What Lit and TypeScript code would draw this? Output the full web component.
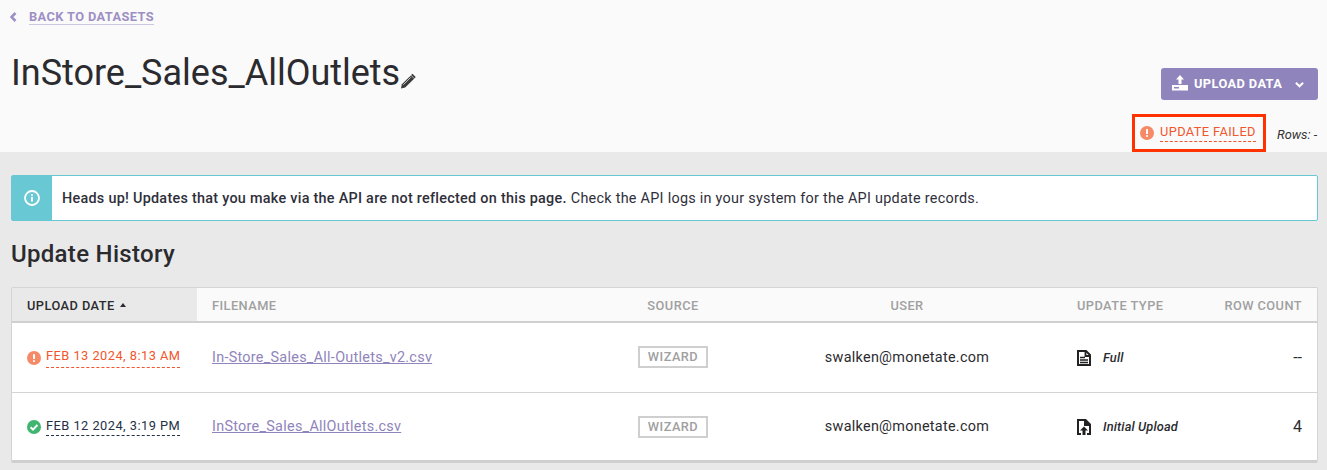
import { LitElement, html, css } from "lit";
import { customElement } from "lit/decorators.js";

const alertIcon = (c: string) => html`<svg class="st" viewBox="0 0 14 14"><circle cx="7" cy="7" r="7" fill="${c}"/><rect x="6" y="3" width="2" height="5" rx=".6" fill="#fff"/><circle cx="7" cy="10" r="1.1" fill="#fff"/></svg>`;
const okIcon = html`<svg class="st" viewBox="0 0 14 14"><circle cx="7" cy="7" r="7" fill="#3fb56f"/><path d="M3.600 7.200 6 9.600 10.400 5" fill="none" stroke="#fff" stroke-width="2"/></svg>`;

@customElement("app-root")
export class AppRoot extends LitElement {
  static styles = css`
    :host { display: block; width: 1327px; height: 470px; overflow: hidden; background: #e9e9e9; font-family: Roboto, "Liberation Sans", sans-serif; color: #2b2b2f; }
    .head { height: 152px; background: #fafafa; box-sizing: border-box; padding: 0 9px 0 11px; display: flex; flex-direction: column; }
    .back { display: flex; align-items: center; height: 34px; margin-left: -1px; }
    .back svg { width: 7px; height: 10px; margin-right: 12px; }
    .back a { font-size: 12.8px; font-weight: 700; letter-spacing: .4px; color: #9d8fc4; border-bottom: 1px solid #cdc6e2; line-height: 14px; }
    .mid { display: flex; justify-content: space-between; align-items: flex-start; height: 82px; }
    .title { display: flex; align-items: flex-end; margin-top: 18px; }
    h1 { margin: 0; font-size: 36px; font-weight: 400; line-height: 42px; color: #2b2b2f; letter-spacing: -.01px; }
    .title svg { width: 16px; height: 17px; margin-bottom: 4px; }
    .upload { margin-top: 34px; width: 157px; height: 32px; padding-bottom: 2px; background: #8f84bb; border-radius: 3px; color: #fff; display: flex; align-items: center; box-sizing: border-box; padding-left: 11px; font-size: 12.8px; font-weight: 700; letter-spacing: .4px; }
    .upload .ic { width: 16px; height: 16px; margin-right: 6px; }
    .upload .ch { width: 9px; height: 7px; margin-left: 13px; margin-top: 2px; }
    .status { display: flex; justify-content: flex-end; align-items: center; height: 36px; margin-top: -1px; }
    .failbox { border: 3px solid #ff3300; height: 38px; box-sizing: border-box; width: 134px; display: flex; align-items: center; padding-left: 5px; gap: 6px; }
    .failbox .t { font-size: 12.8px; color: #f2552c; letter-spacing: .4px; line-height: 14px; border-bottom: 1px dashed #f2552c; padding-bottom: 2px; margin-top: 1px; }
    .st { width: 14px; height: 14px; flex: none; }
    .rows { font-size: 12.8px; font-style: italic; color: #333; margin-left: 11px; margin-top: 3px; width: 41px; white-space: nowrap; }
    .main { padding: 23px 9px 0 11px; }
    .note { display: flex; height: 46px; box-sizing: border-box; border: 1px solid #68c8d4; border-radius: 2px; background: #fff; align-items: center; font-size: 14.4px; letter-spacing: .27px; color: #2f2f3a; }
    .note .side { width: 40px; height: 100%; background: #68c8d4; display: flex; align-items: center; justify-content: center; margin-right: 10px; }
    .note svg { width: 16px; height: 16px; }
    .note b { font-weight: 500; margin-right: 4px; }
    h2 { margin: 19px 0 19px; font-size: 24px; font-weight: 500; line-height: 28px; letter-spacing: .3px; color: #2b2b2f; }
    .table { border: 1px solid #d4d4d4; border-bottom: 3px solid #cfcfcf; background: #fff; border-radius: 2px; height: 176px; box-sizing: border-box; }
    .r { display: grid; grid-template-columns: 185px 397px 158px 310px 145px 110px; align-items: center; }
    .hr { height: 35px; background: #fafafa; border-bottom: 2px solid #d0d0d0; box-sizing: border-box; font-size: 12.8px; font-weight: 500; letter-spacing: .45px; color: #a0a0a0; }
    .hr > div { height: 100%; display: flex; align-items: center; padding-top: 1px; box-sizing: border-box; }
    .hr .act { background: #e9e9e9; color: #2b2b2f; padding-left: 15px; }
    .hr .act svg { width: 6px; height: 4px; margin-left: 5px; }
    .fn { padding-left: 15px; } .c { justify-content: center; text-align: center; } .ut { padding-left: 15px; } .rc { justify-content: flex-end; text-align: right; padding-right: 15px; }
    .row { height: 70px; border-bottom: 1px solid #d4d4d4; box-sizing: border-box; font-size: 14.4px; letter-spacing: .28px; }
    .row.last { border-bottom: 0; height: 67px; }
    .date { display: flex; align-items: center; gap: 5px; padding-left: 15px; }
    .date span { font-size: 12.8px; letter-spacing: .48px; line-height: 14px; border-bottom: 1px dashed currentColor; padding-bottom: 4px; margin-top: 1px; }
    .date.bad span { color: #f2552c; }
    .date.ok span { color: #253047; padding-bottom: 2px; }
    .fn a { color: #8f84bb; text-decoration: underline; }
    .badge { justify-self: center; width: 70px; height: 22px; margin-bottom: 2px; box-sizing: border-box; border: 2px solid #cfcfcf; font-size: 12.8px; font-weight: 500; letter-spacing: .45px; color: #a0a0a0; display: flex; align-items: center; justify-content: center; }
    .last .badge { margin-bottom: 0; }
    .typ { display: flex; align-items: center; padding-left: 15px; font-size: 12.8px; font-style: italic; font-weight: 500; letter-spacing: .15px; color: #2b2b2f; }
    .typ svg { width: 14px; height: 16px; margin-right: 12px; }
    .num { text-align: right; padding-right: 15px; font-size: 16px; letter-spacing: 0; }
  `;

  row(cls: string, dateCls: string, icon: unknown, date: string, file: string, typIcon: unknown, typ: string, n: string) {
    return html`<div class="r row ${cls}">
      <div class="date ${dateCls}">${icon}<span>${date}</span></div>
      <div class="fn"><a>${file}</a></div>
      <div class="badge">WIZARD</div>
      <div class="c">swalken@monetate.com</div>
      <div class="typ">${typIcon}${typ}</div>
      <div class="num">${n}</div>
    </div>`;
  }

  render() {
    const fullIcon = html`<svg viewBox="0 0 14 16"><path d="M1 1h8l4 4v10H1z" fill="none" stroke="#222" stroke-width="2"/><path d="M8.500 1v5h5" fill="none" stroke="#222" stroke-width="1.800"/><path d="M3 7.500h5M3 10h8M3 12.500h8" stroke="#222" stroke-width="1.500"/></svg>`;
    const initIcon = html`<svg viewBox="0 0 14 16"><path d="M0 0h9l5 5v11h-4v-2h2V7H7V2H2v12h2v2H0z" fill="#222"/><path d="M7 7.500 11 11.500H8.500V16h-3v-4.500H3z" fill="#222"/></svg>`;
    return html`
      <div class="head">
        <div class="back"><svg viewBox="0 0 7 10"><path d="M5.500 1 1.500 5l4 4" fill="none" stroke="#9d8fc4" stroke-width="2.600"/></svg><a>BACK TO DATASETS</a></div>
        <div class="mid">
          <div class="title"><h1>InStore_Sales_AllOutlets</h1>
            <svg viewBox="0 0 17 17"><path d="M1 16l1-4.500L11.500 2l3.500 3.500L5.500 15z" fill="#3a3a3a"/><path d="M12.500 1l3.500 3.500" stroke="#3a3a3a" stroke-width="2"/><path d="M3.500 12l8-8" stroke="#fafafa" stroke-width=".8"/></svg>
          </div>
          <div class="upload">
            <svg class="ic" viewBox="0 0 16 16"><path d="M8 0l4 4.500H9.500V9h-3V4.500H4z" fill="#fff"/><path d="M0 10h16v5.500H0z" fill="#fff"/><rect x="2" y="12" width="5" height="1.500" fill="#8f84bb"/></svg>
            UPLOAD DATA
            <svg class="ch" viewBox="0 0 10 7"><path d="M1 1.500 5 5.500l4-4" fill="none" stroke="#fff" stroke-width="2.200"/></svg>
          </div>
        </div>
        <div class="status">
          <div class="failbox">${alertIcon("#f68a67")}<span class="t">UPDATE FAILED</span></div>
          <div class="rows">Rows: -</div>
        </div>
      </div>
      <div class="main">
        <div class="note">
          <div class="side"><svg viewBox="0 0 16 16"><circle cx="8" cy="8" r="7" fill="none" stroke="#fff" stroke-width="1.800"/><rect x="7" y="7" width="2" height="4.500" fill="#fff"/><circle cx="8" cy="5" r="1.100" fill="#fff"/></svg></div>
          <b>Heads up! Updates that you make via the API are not reflected on this page.</b> Check the API logs in your system for the API update records.
        </div>
        <h2>Update History</h2>
        <div class="table">
          <div class="r hr">
            <div class="act">UPLOAD DATE<svg viewBox="0 0 6 4"><path d="M3 0l3 4H0z" fill="#2b2b2f"/></svg></div>
            <div class="fn">FILENAME</div>
            <div class="c">SOURCE</div>
            <div class="c">USER</div>
            <div class="ut">UPDATE TYPE</div>
            <div class="rc">ROW COUNT</div>
          </div>
          ${this.row("", "bad", alertIcon("#f68a67"), "FEB 13 2024, 8:13 AM", "In-Store_Sales_All-Outlets_v2.csv", fullIcon, "Full", "--")}
          ${this.row("last", "ok", okIcon, "FEB 12 2024, 3:19 PM", "InStore_Sales_AllOutlets.csv", initIcon, "Initial Upload", "4")}
        </div>
      </div>
    `;
  }
}
